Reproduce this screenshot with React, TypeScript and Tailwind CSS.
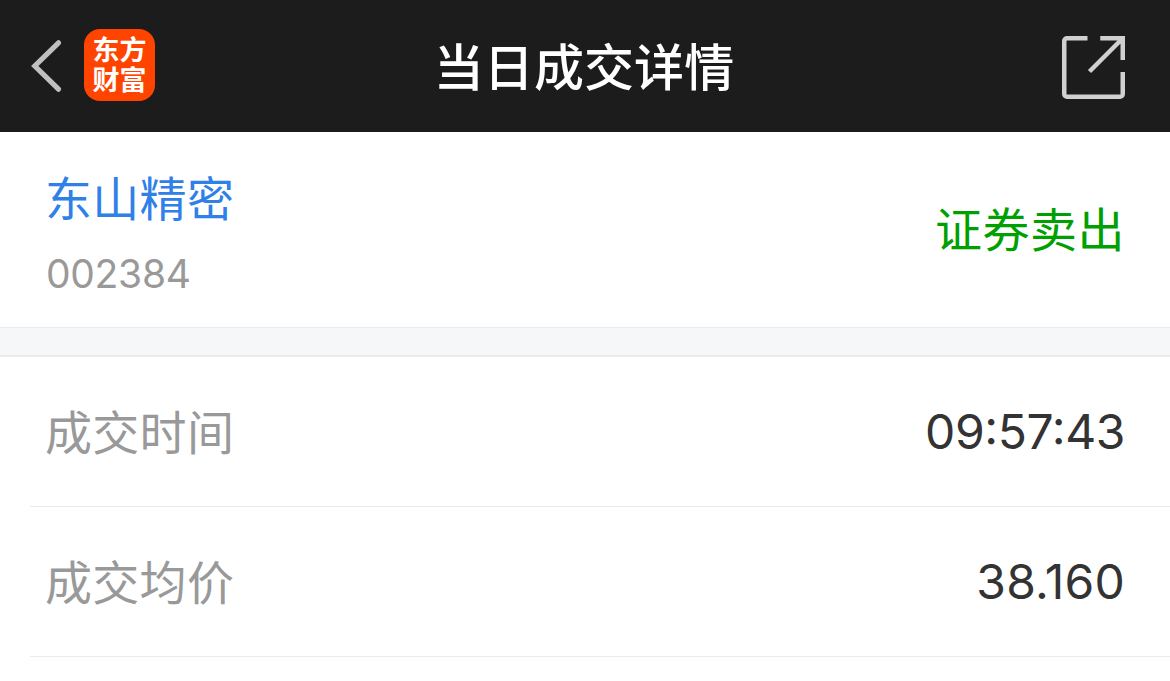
interface DetailRow {
  label: string;
  value: string;
  valueClass: string;
}

const rows: DetailRow[] = [
  { label: "成交时间", value: "09:57:43", valueClass: "tracking-[-0.4px]" },
  { label: "成交均价", value: "38.160", valueClass: "tracking-[0.2px]" },
];

const BackIcon = () => (
  <svg width="32" height="54" viewBox="0 0 32 54" fill="none">
    <path
      d="M27.500 3.800 3.800 27l23.700 23.200"
      stroke="#c0c0c0"
      strokeWidth="5.2"
      strokeLinecap="round"
    />
  </svg>
);

const ShareIcon = () => (
  <svg width="64" height="64" viewBox="0 0 64 64" fill="none" stroke="#d0d0d0" strokeWidth="4.5">
    <path d="M25.500 2.250H5A2.750 2.750 0 0 0 2.250 5v53A2.750 2.750 0 0 0 5 60.750h53A2.750 2.750 0 0 0 60.750 58V36" />
    <path d="M38.250 2.250H60.750V24M60.500 2.500 27.500 35.500" />
  </svg>
);

const AppLogo = () => (
  <div className="mb-[2px] flex h-[72px] w-[71px] flex-col items-center justify-center rounded-[16px] bg-[#ff4400] pt-[2px] text-[27px] leading-[30px] font-bold text-white">
    <span>东方</span>
    <span>财富</span>
  </div>
);

export default function App() {
  return (
    <div className="h-[681px] w-full overflow-hidden bg-white font-['Inter','Noto_Sans_CJK_SC',sans-serif]">
      {/* Title bar */}
      <header className="grid h-[132px] grid-cols-[1fr_auto_1fr] items-center bg-[#1c1c1c] pr-[44px] pl-[31px]">
        <div className="flex items-center gap-[21px]">
          <BackIcon />
          <AppLogo />
        </div>
        <h1 className="mt-[3px] mr-[-11px] text-[50px] leading-[60px] font-medium tracking-[0.1px] text-white">
          当日成交详情
        </h1>
        <div className="flex justify-end pt-[4px]">
          <ShareIcon />
        </div>
      </header>

      {/* Security */}
      <section className="flex h-[196px] items-center justify-between border-b border-[#ebebeb] pr-[45px] pl-[45px]">
        <div className="pt-[10px]">
          <h2 className="text-[47px] leading-[64px] tracking-[0.3px] text-[#2f80e7]">东山精密</h2>
          <p className="mt-[15px] pl-px text-[39px] leading-[56px] tracking-[-0.3px] text-[#999999]">002384</p>
        </div>
        <span className="text-[47px] leading-[64px] tracking-[0.5px] text-[#00a000]">证券卖出</span>
      </section>

      <div className="h-[29px] border-b-2 border-[#ebebeb] bg-[#f6f7f9]" />

      {/* Trade details */}
      {rows.map((row) => (
        <div
          key={row.label}
          className="ml-[30px] flex h-[150px] items-center justify-between border-b border-[#ebebeb] pr-[45px] pl-[15px]"
        >
          <span className="pt-[2px] text-[47px] leading-[64px] tracking-[0.3px] text-[#999999]">{row.label}</span>
          <span
            className={`text-[48px] leading-[64px] text-[#333333] [font-feature-settings:'case'] ${row.valueClass}`}
          >
            {row.value}
          </span>
        </div>
      ))}
    </div>
  );
}
